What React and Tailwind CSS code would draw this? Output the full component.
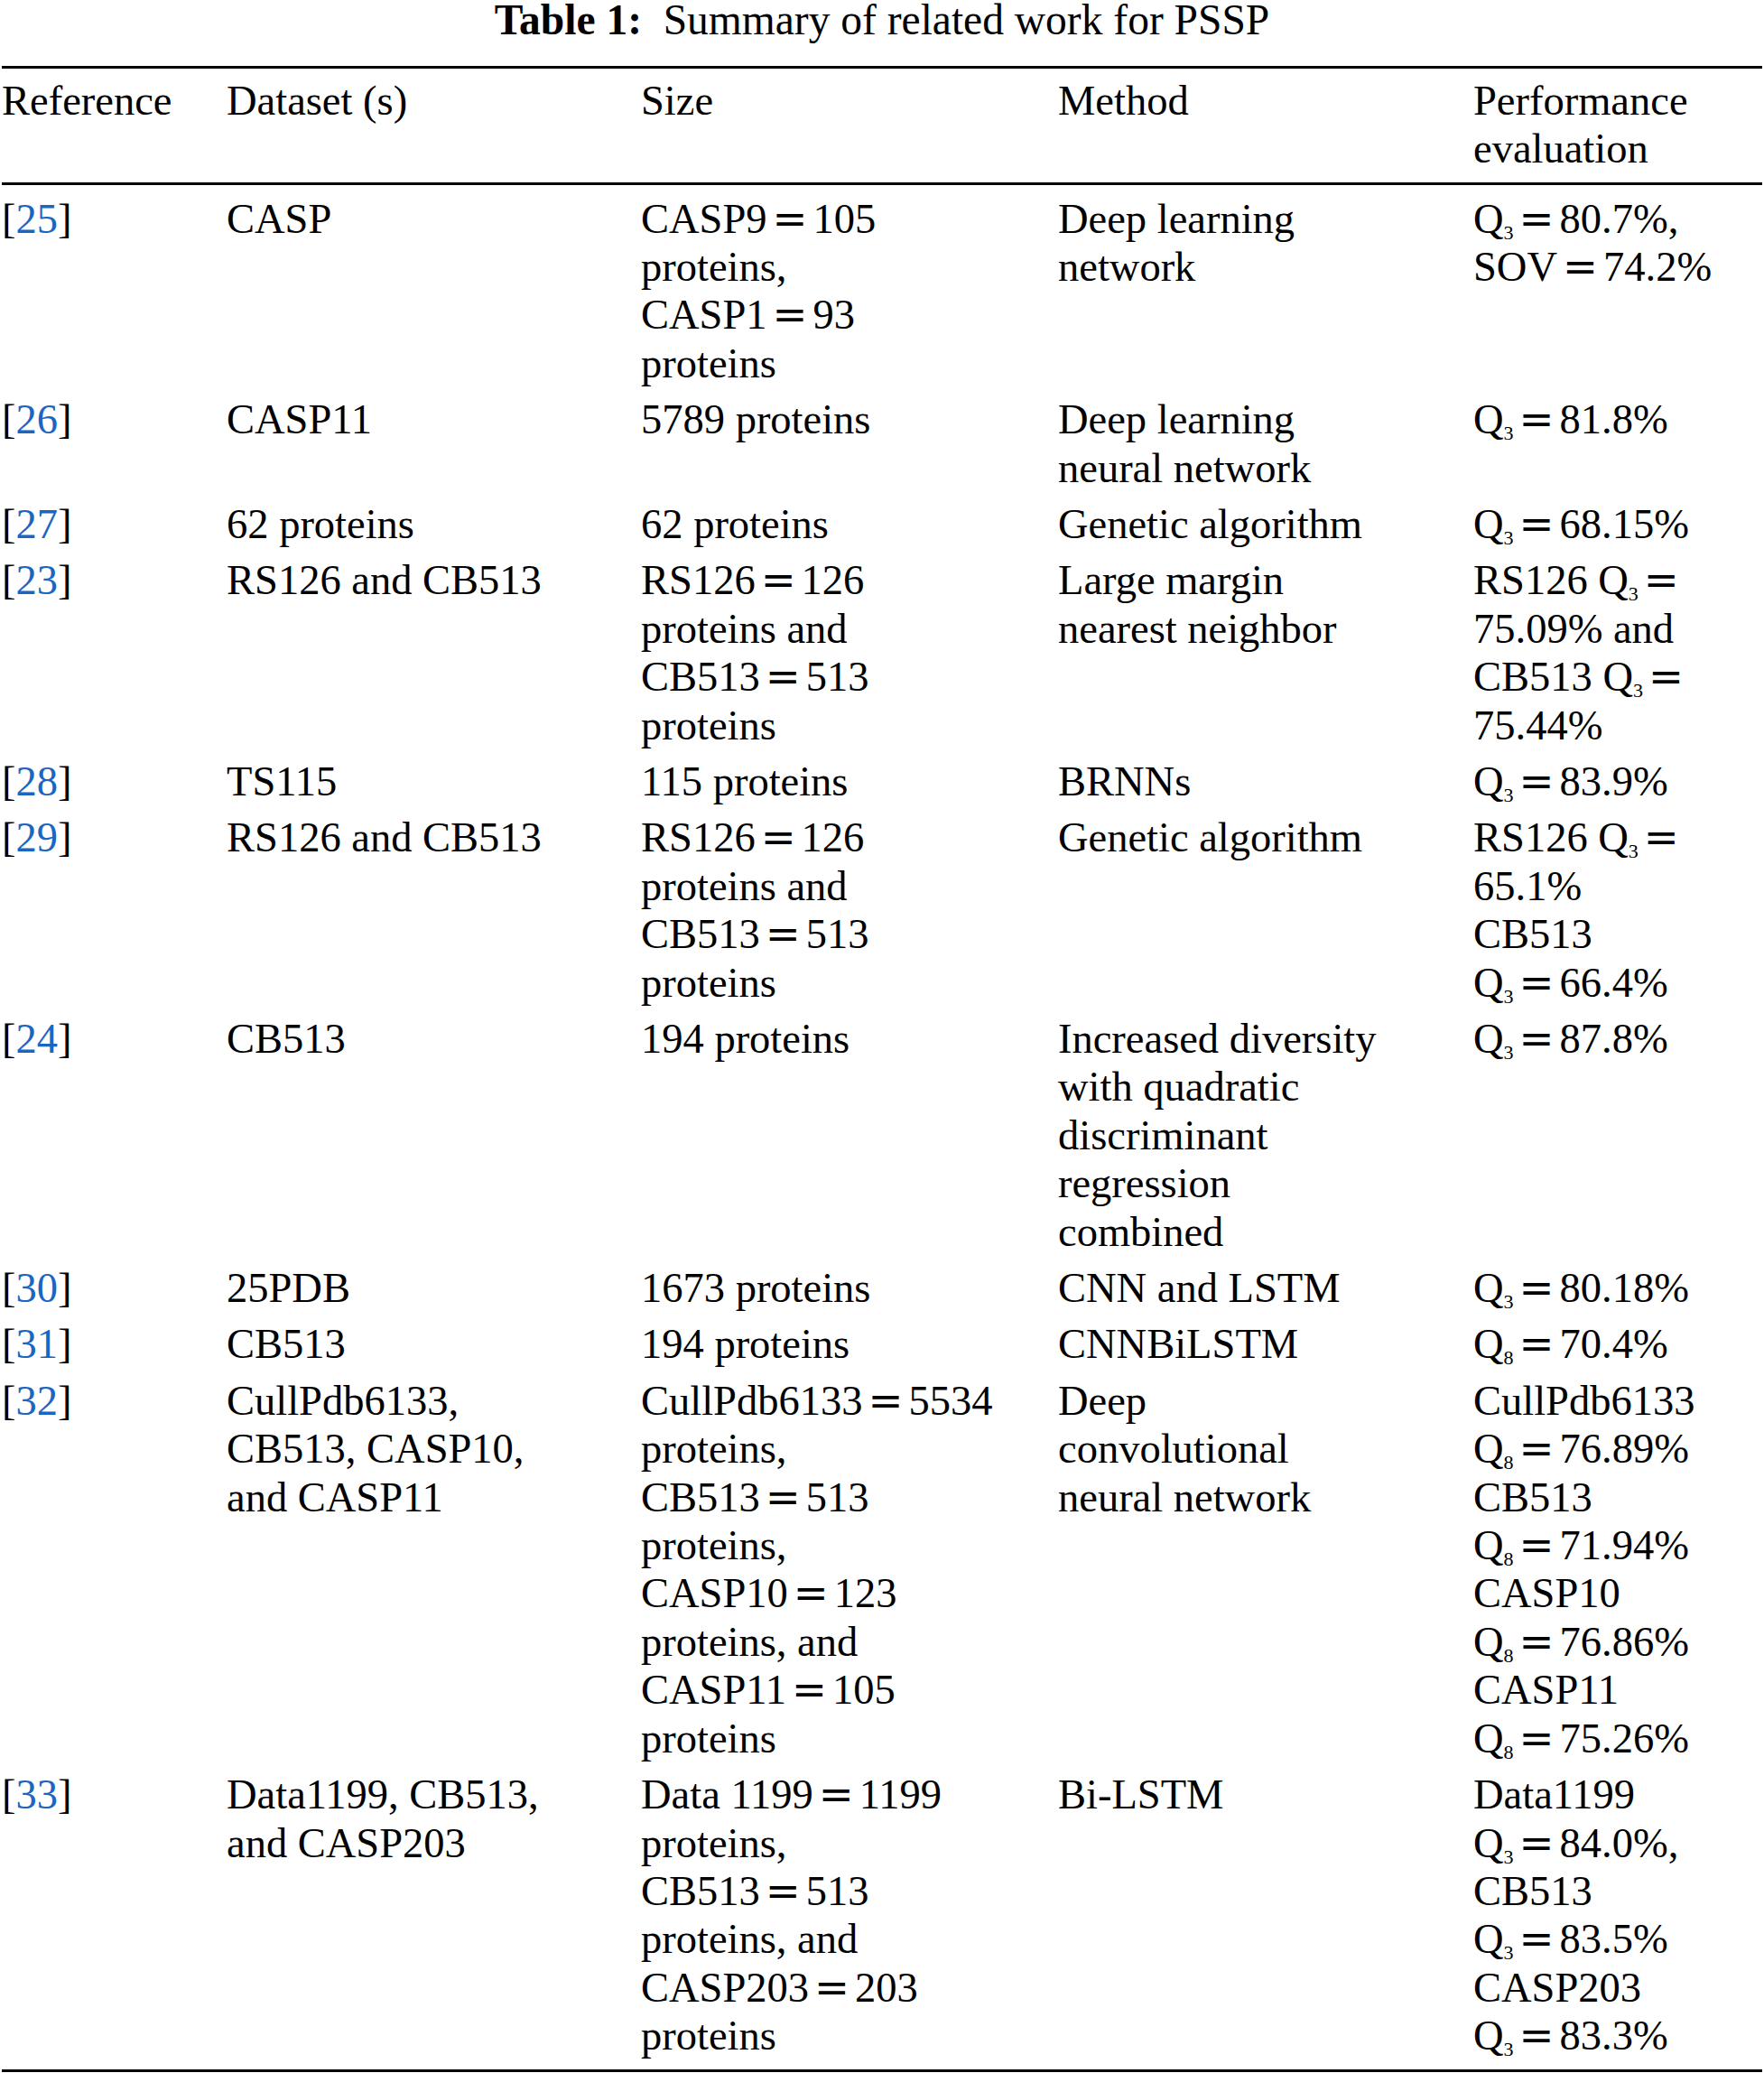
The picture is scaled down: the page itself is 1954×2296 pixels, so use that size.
import React from "react";

const COLS = "grid grid-cols-[249px_459px_462px_460px_1fr]";

const header = [["Reference"], ["Dataset (s)"], ["Size"], ["Method"], ["Performance", "evaluation"]];

// "_3" -> subscript 3, " = " -> math equals
const rows = [
  {
    ref: "25",
    dataset: ["CASP"],
    size: ["CASP9 = 105", "proteins,", "CASP1 = 93", "proteins"],
    method: ["Deep learning", "network"],
    perf: ["Q_3 = 80.7%,", "SOV = 74.2%"],
  },
  {
    ref: "26",
    dataset: ["CASP11"],
    size: ["5789 proteins"],
    method: ["Deep learning", "neural network"],
    perf: ["Q_3 = 81.8%"],
  },
  {
    ref: "27",
    dataset: ["62 proteins"],
    size: ["62 proteins"],
    method: ["Genetic algorithm"],
    perf: ["Q_3 = 68.15%"],
  },
  {
    ref: "23",
    dataset: ["RS126 and CB513"],
    size: ["RS126 = 126", "proteins and", "CB513 = 513", "proteins"],
    method: ["Large margin", "nearest neighbor"],
    perf: ["RS126 Q_3 =", "75.09% and", "CB513 Q_3 =", "75.44%"],
  },
  {
    ref: "28",
    dataset: ["TS115"],
    size: ["115 proteins"],
    method: ["BRNNs"],
    perf: ["Q_3 = 83.9%"],
  },
  {
    ref: "29",
    dataset: ["RS126 and CB513"],
    size: ["RS126 = 126", "proteins and", "CB513 = 513", "proteins"],
    method: ["Genetic algorithm"],
    perf: ["RS126 Q_3 =", "65.1%", "CB513", "Q_3 = 66.4%"],
  },
  {
    ref: "24",
    dataset: ["CB513"],
    size: ["194 proteins"],
    method: ["Increased diversity", "with quadratic", "discriminant", "regression", "combined"],
    perf: ["Q_3 = 87.8%"],
  },
  {
    ref: "30",
    dataset: ["25PDB"],
    size: ["1673 proteins"],
    method: ["CNN and LSTM"],
    perf: ["Q_3 = 80.18%"],
  },
  {
    ref: "31",
    dataset: ["CB513"],
    size: ["194 proteins"],
    method: ["CNNBiLSTM"],
    perf: ["Q_8 = 70.4%"],
  },
  {
    ref: "32",
    dataset: ["CullPdb6133,", "CB513, CASP10,", "and CASP11"],
    size: [
      "CullPdb6133 = 5534",
      "proteins,",
      "CB513 = 513",
      "proteins,",
      "CASP10 = 123",
      "proteins, and",
      "CASP11 = 105",
      "proteins",
    ],
    method: ["Deep", "convolutional", "neural network"],
    perf: [
      "CullPdb6133",
      "Q_8 = 76.89%",
      "CB513",
      "Q_8 = 71.94%",
      "CASP10",
      "Q_8 = 76.86%",
      "CASP11",
      "Q_8 = 75.26%",
    ],
  },
  {
    ref: "33",
    dataset: ["Data1199, CB513,", "and CASP203"],
    size: ["Data 1199 = 1199", "proteins,", "CB513 = 513", "proteins, and", "CASP203 = 203", "proteins"],
    method: ["Bi-LSTM"],
    perf: ["Data1199", "Q_3 = 84.0%,", "CB513", "Q_3 = 83.5%", "CASP203", "Q_3 = 83.3%"],
  },
];

function Line({ text }) {
  const parts = text.split(/(_\d|\s*=\s*)/).filter((p) => p !== "");
  return (
    <div className="whitespace-nowrap">
      {parts.map((p, i) => {
        if (/^_\d$/.test(p))
          return (
            <span key={i} className="text-[22px] leading-none align-[-7px]">
              {p.slice(1)}
            </span>
          );
        if (/^\s*=\s*$/.test(p))
          return (
            <span key={i} className="mx-[6px] font-['DejaVu_Serif',serif]">
              =
            </span>
          );
        return <React.Fragment key={i}>{p}</React.Fragment>;
      })}
    </div>
  );
}

function Cell({ lines }) {
  return (
    <div>
      {lines.map((l, i) => (
        <Line key={i} text={l} />
      ))}
    </div>
  );
}

export default function App() {
  return (
    <div className="w-[1954px] bg-white text-black font-['Liberation_Serif','Times_New_Roman',serif]">
      <div className="text-center text-[47.5px] leading-[44px] whitespace-nowrap">
        <span className="font-bold">Table 1:</span>
        <span className="ml-[0.5em]">Summary of related work for PSSP</span>
      </div>

      <div className="mt-[28.5px] mx-[2px] border-t-[3px] border-b-[3px] border-black text-[46.5px] leading-[53.4px]">
        {/* header */}
        <div className={`${COLS} pt-[9px] pb-[10.3px] border-b-[3px] border-black`}>
          {header.map((h, i) => (
            <Cell key={i} lines={h} />
          ))}
        </div>

        {/* body */}
        <div className="pt-[6.4px] pb-[5.5px]">
          {rows.map((r) => (
            <div key={r.ref} className={`${COLS} py-[4.5px]`}>
              <div className="whitespace-nowrap">
                [<span className="text-[#1a66c2]">{r.ref}</span>]
              </div>
              <Cell lines={r.dataset} />
              <Cell lines={r.size} />
              <Cell lines={r.method} />
              <Cell lines={r.perf} />
            </div>
          ))}
        </div>
      </div>
    </div>
  );
}
